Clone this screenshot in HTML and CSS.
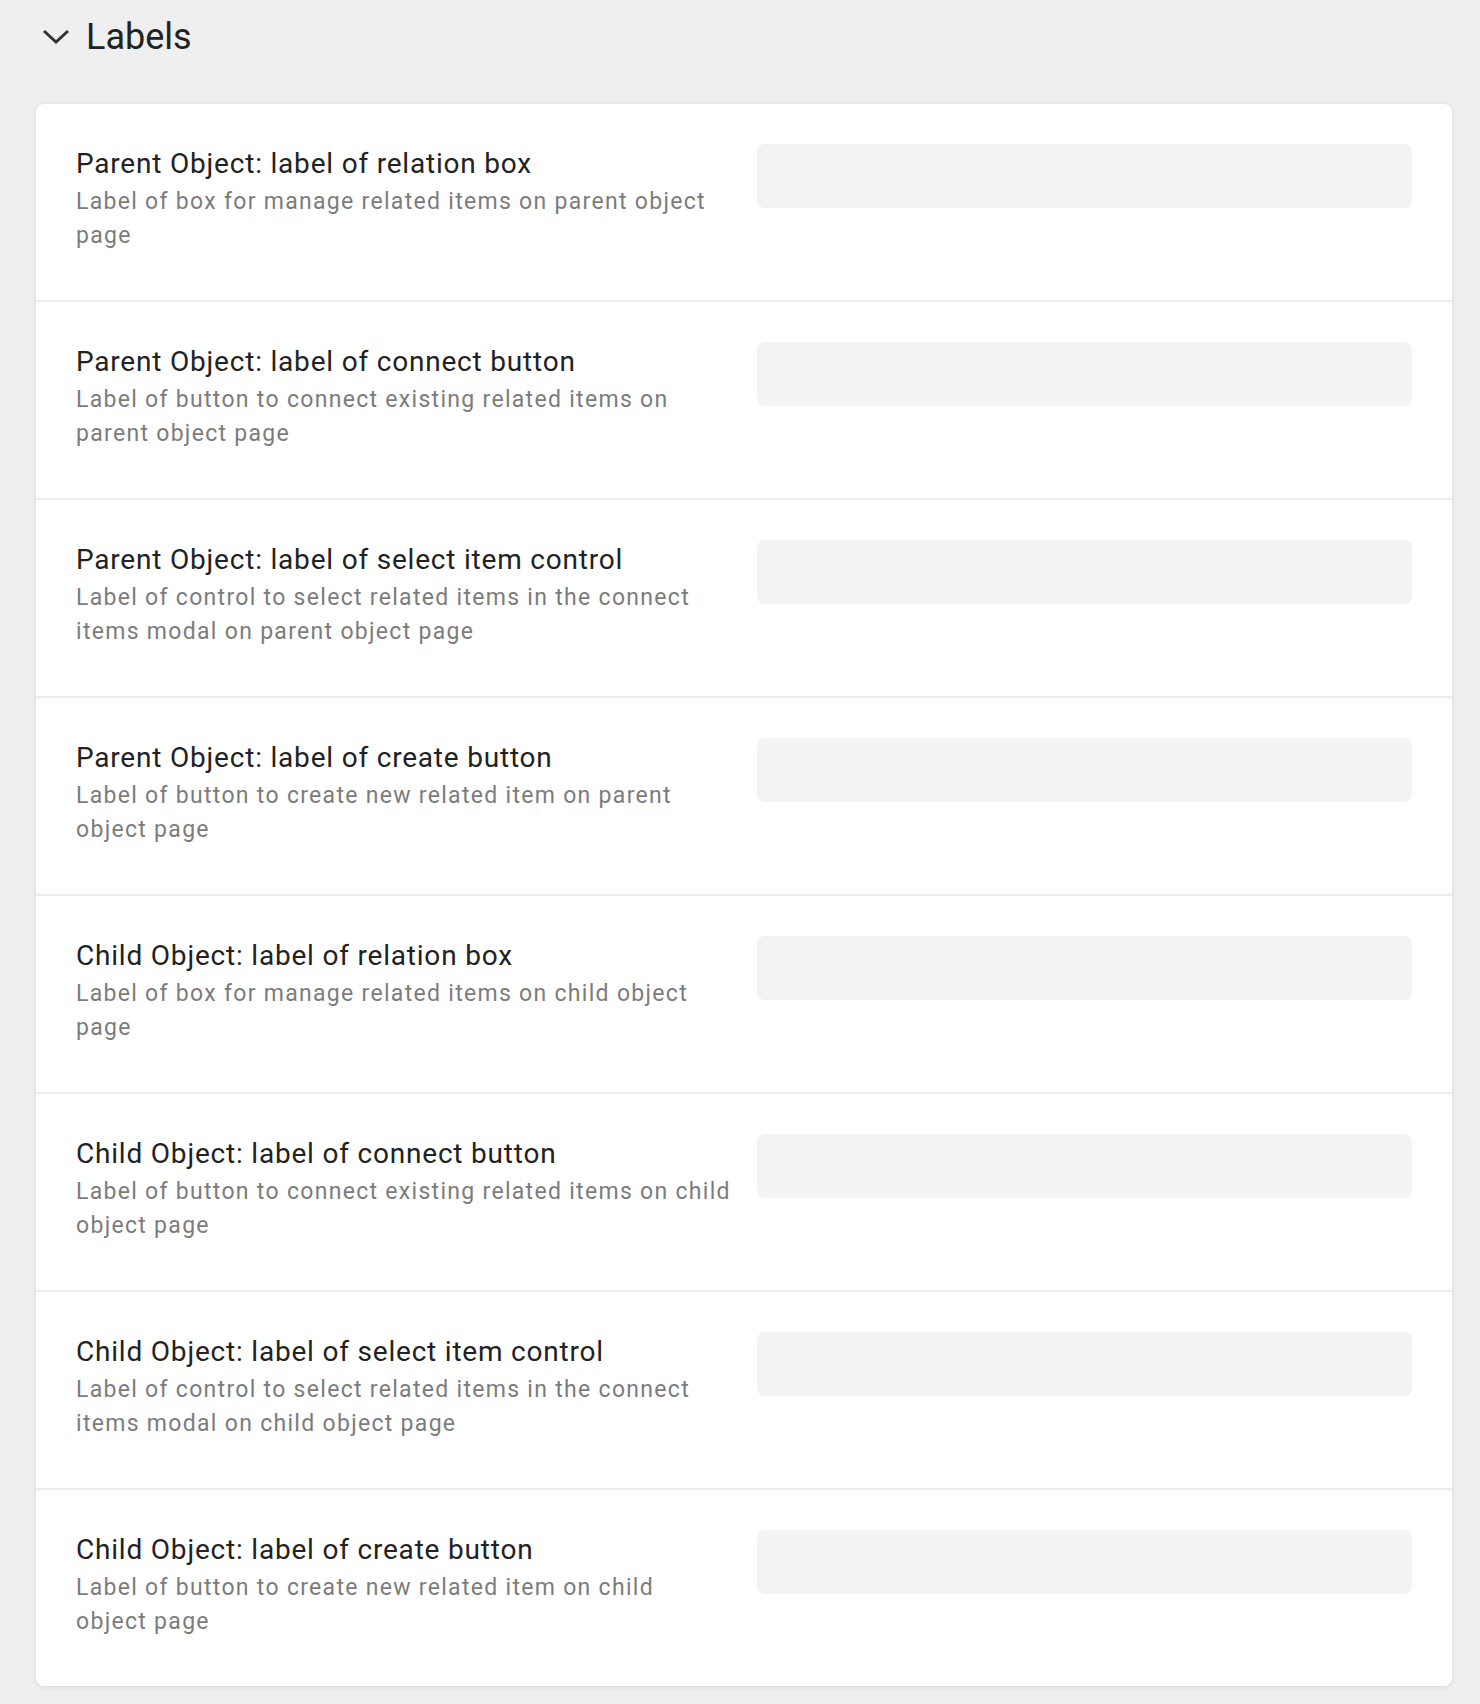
FILE: index.html
```html
<!DOCTYPE html>
<html lang="en">
<head>
    <meta charset="UTF-8">
    <title>Labels</title>
    <link rel="stylesheet" href="styles.css">
</head>
<body>
<div class="page">
    <div class="section-head">
        <svg class="chevron" width="32" height="32" viewBox="0 0 32 32">
            <path d="M4 10 L16 21 L28 10" fill="none" stroke="#333333" stroke-width="3"/>
        </svg>
        <span class="section-title">Labels</span>
    </div>
    <div class="card">
        <div class="row">
            <div class="row-text">
                <div class="row-title">Parent Object: label of relation box</div>
                <div class="row-desc">Label of box for manage related items on parent object page</div>
            </div>
            <input class="row-input" type="text">
        </div>
        <div class="row">
            <div class="row-text">
                <div class="row-title">Parent Object: label of connect button</div>
                <div class="row-desc">Label of button to connect existing related items on parent object page</div>
            </div>
            <input class="row-input" type="text">
        </div>
        <div class="row">
            <div class="row-text">
                <div class="row-title">Parent Object: label of select item control</div>
                <div class="row-desc">Label of control to select related items in the connect items modal on parent object page</div>
            </div>
            <input class="row-input" type="text">
        </div>
        <div class="row">
            <div class="row-text">
                <div class="row-title">Parent Object: label of create button</div>
                <div class="row-desc">Label of button to create new related item on parent object page</div>
            </div>
            <input class="row-input" type="text">
        </div>
        <div class="row">
            <div class="row-text">
                <div class="row-title">Child Object: label of relation box</div>
                <div class="row-desc">Label of box for manage related items on child object page</div>
            </div>
            <input class="row-input" type="text">
        </div>
        <div class="row">
            <div class="row-text">
                <div class="row-title">Child Object: label of connect button</div>
                <div class="row-desc">Label of button to connect existing related items on child object page</div>
            </div>
            <input class="row-input" type="text">
        </div>
        <div class="row">
            <div class="row-text">
                <div class="row-title">Child Object: label of select item control</div>
                <div class="row-desc">Label of control to select related items in the connect items modal on child object page</div>
            </div>
            <input class="row-input" type="text">
        </div>
        <div class="row">
            <div class="row-text">
                <div class="row-title">Child Object: label of create button</div>
                <div class="row-desc">Label of button to create new related item on child<br>object page</div>
            </div>
            <input class="row-input" type="text">
        </div>
    </div>
</div>
</body>
</html>
```

FILE: styles.css
```css
* {
    padding: 0;
    margin: 0;
    box-sizing: border-box;
}
body, html {
    width: 100%;
    height: 100%;
}
body {
    background-color: #efefef;
    font-family: Roboto, "Liberation Sans", sans-serif;
    color: #222222;
}
.page {
    padding: 15px 28px 18px 36px;
}
.section-head {
    display: flex;
    align-items: center;
    height: 44px;
    padding-left: 4px;
    margin-bottom: 45px;
}
.chevron {
    display: block;
}
.section-title {
    margin-left: 14px;
    font-size: 36px;
    line-height: 44px;
    color: #222222;
}
.card {
    background-color: #ffffff;
    border-radius: 8px;
    box-shadow: 0 1px 5px rgba(0, 0, 0, 0.1);
}
.row {
    display: grid;
    grid-template-columns: 1fr 655px;
    column-gap: 20px;
    align-items: start;
    height: 198px;
    padding: 40px 40px 0 40px;
    border-bottom: 2px solid #ececec;
}
.row:last-child {
    height: 196px;
    border-bottom: none;
}
.row-title {
    font-size: 28px;
    line-height: 40px;
    letter-spacing: 0.8px;
    color: #222222;
}
.row-desc {
    margin-top: 1px;
    font-size: 23px;
    line-height: 34px;
    letter-spacing: 1.3px;
    color: #7c7c7c;
}
.row-input {
    display: block;
    width: 100%;
    height: 64px;
    border: none;
    border-radius: 8px;
    background-color: #f3f3f3;
    outline: none;
}
```
